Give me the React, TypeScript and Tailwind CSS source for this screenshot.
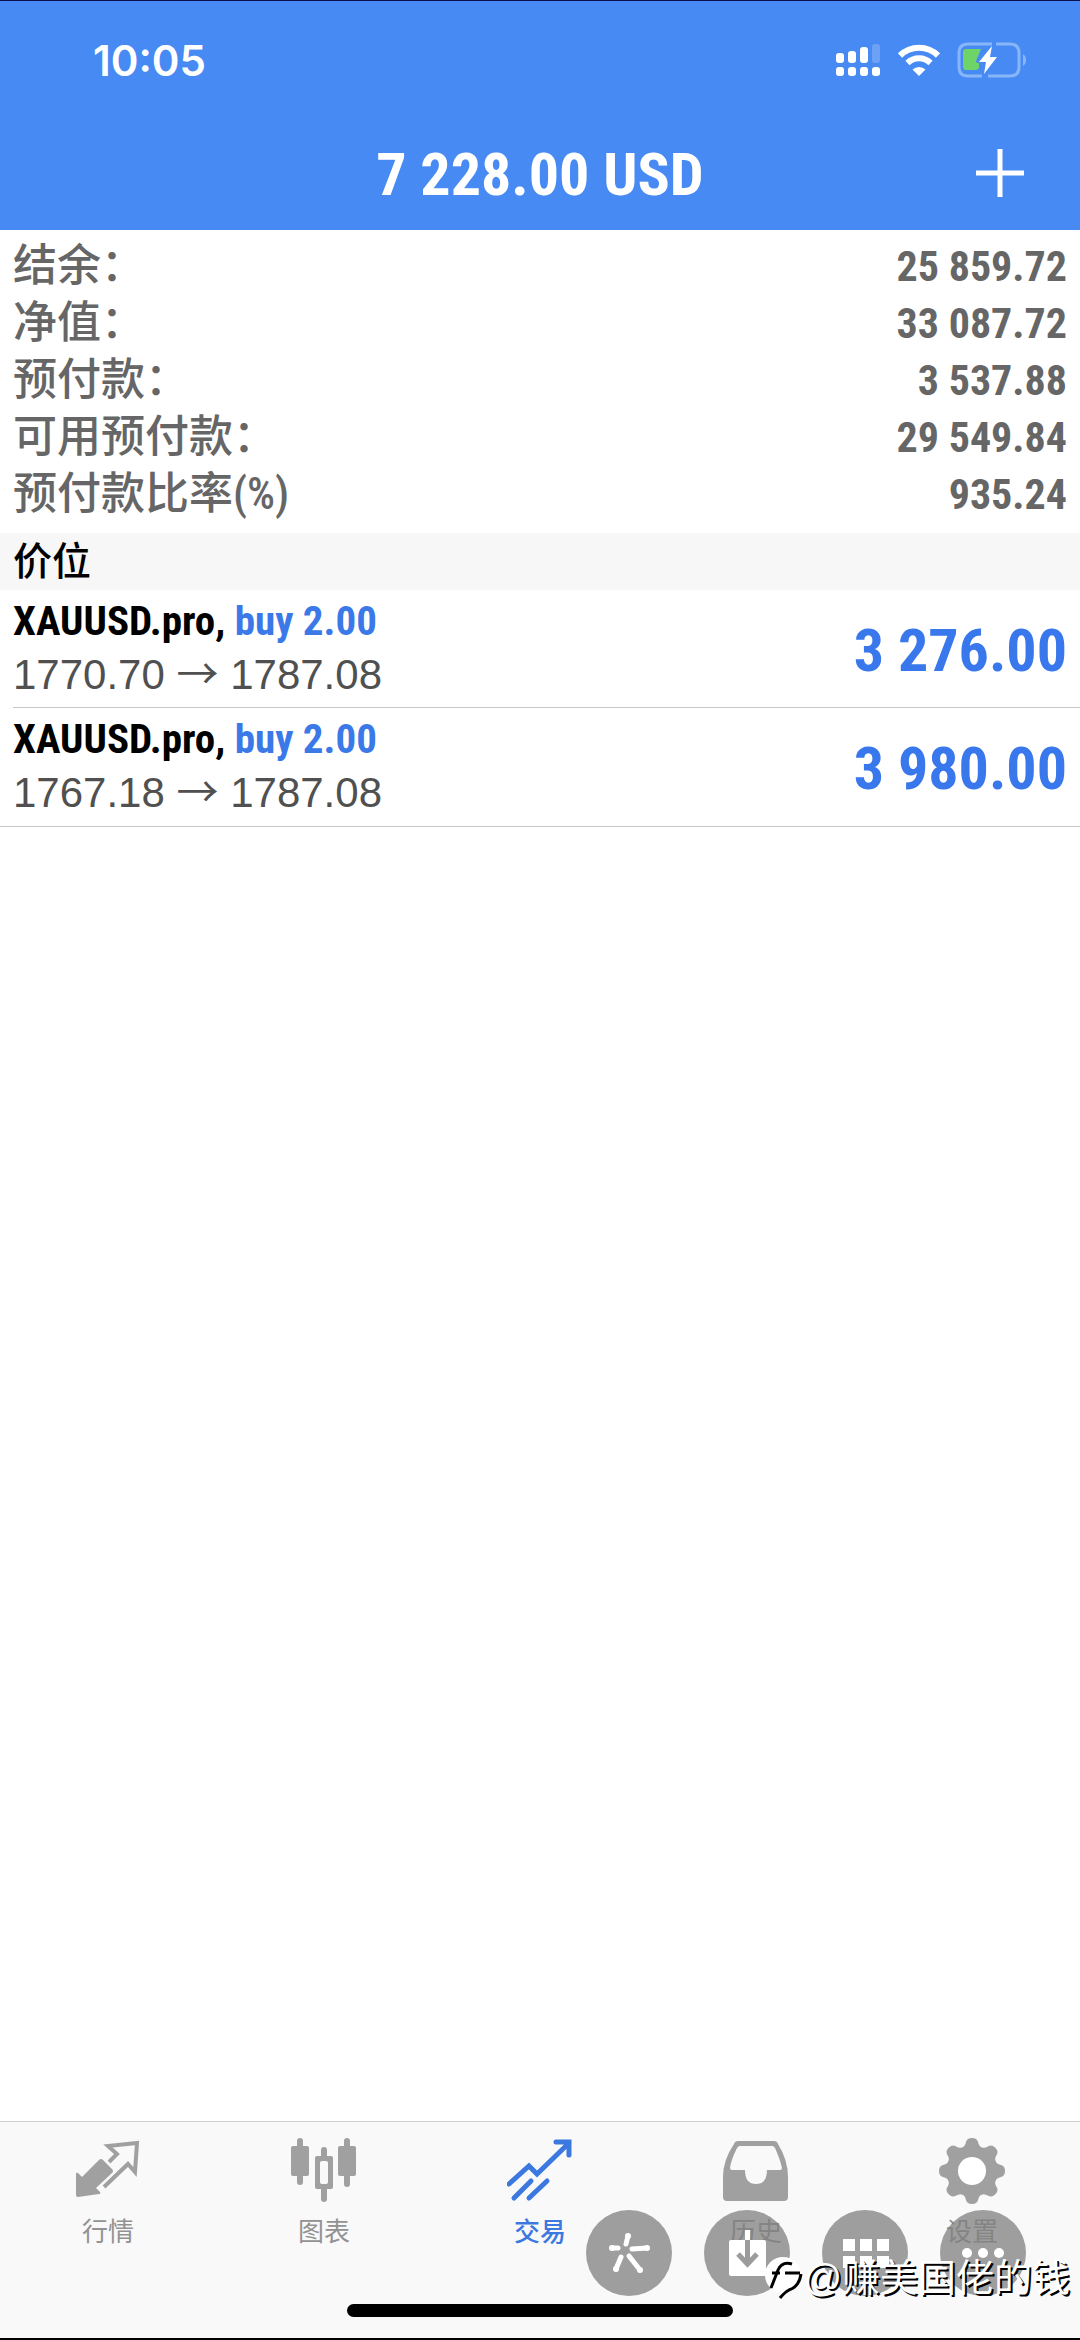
import type { ReactNode } from 'react';

const narrow = "font-['Roboto_Condensed','Noto_Sans_CJK_SC',sans-serif]";
const sans = "font-['Liberation_Sans','Noto_Sans_CJK_SC',sans-serif]";

const summary = [
  { label: '结余：', value: '25 859.72' },
  { label: '净值：', value: '33 087.72' },
  { label: '预付款：', value: '3 537.88' },
  { label: '可用预付款：', value: '29 549.84' },
  { label: '预付款比率(%)', value: '935.24' },
];

const positions = [
  { symbol: 'XAUUSD.pro', side: 'buy 2.00', open: '1770.70', current: '1787.08', profit: '3 276.00' },
  { symbol: 'XAUUSD.pro', side: 'buy 2.00', open: '1767.18', current: '1787.08', profit: '3 980.00' },
];

function SignalIcon() {
  return (
    <svg width="46" height="34" viewBox="0 0 46 34" fill="#fff">
      <rect x="1" y="10" width="8" height="10" rx="3" />
      <rect x="13" y="8" width="8" height="12" rx="3" />
      <rect x="25" y="4" width="8" height="16" rx="3" />
      <rect x="37" y="1" width="8" height="19" rx="3" opacity=".2" />
      <rect x="1" y="24" width="8" height="9" rx="3" />
      <rect x="13" y="24" width="8" height="9" rx="3" />
      <rect x="25" y="24" width="8" height="9" rx="3" />
      <rect x="37" y="24" width="8" height="9" rx="3" />
    </svg>
  );
}

function WifiIcon() {
  return (
    <svg width="44" height="34" viewBox="0 0 44 34" fill="none" stroke="#fff" strokeWidth="6">
      <path d="M3 12.5a27 27 0 0 1 38 0" />
      <path d="M10.500 20a16.500 16.500 0 0 1 23 0" />
      <path d="M22 33l-6.500-6.500a9.500 9.500 0 0 1 13 0z" fill="#fff" stroke="none" />
    </svg>
  );
}

function BatteryIcon() {
  return (
    <svg width="70" height="36" viewBox="0 0 70 36" fill="none">
      <path d="M35 2H11Q2 2 2 11V25Q2 34 11 34H25M31 34H53Q62 34 62 25V11Q62 2 53 2H39" stroke="#87b6f8" strokeWidth="3" />
      <path d="M66 12q3 2 3 6t-3 6z" fill="#87b6f8" />
      <path d="M9 7h15l-5 12q0 2 3 2v5q-1 2-3 2H9q-3 0-3-3V10q0-3 3-3z" fill="#6fd468" />
      <path d="M35 4L22 20h7l-2 12 13-17h-7z" fill="#fff" />
    </svg>
  );
}

function QuotesIcon() {
  return (
    <svg width="66" height="66" viewBox="0 0 66 66">
      <path d="M1 36q0-2 2-1l4 4 17-17q2-2 4 0l9 9q2 2 0 4L21 50l4 4q1 2-1 2L3 59q-2 0-2-2z" fill="#a0a0a0" />
      <path d="M34 24l8-8-9-8 29-3-2 29-7-8-24 23" fill="none" stroke="#a0a0a0" strokeWidth="4" />
    </svg>
  );
}

function ChartIcon() {
  return (
    <svg width="66" height="66" viewBox="0 0 66 66" fill="#a0a0a0">
      <rect x="6" y="0" width="6" height="47" rx="3" />
      <rect x="0" y="8" width="18" height="30" rx="2" />
      <rect x="53" y="0" width="6" height="49" rx="3" />
      <rect x="47" y="8" width="18" height="30" rx="2" />
      <rect x="30" y="9" width="6" height="55" rx="3" />
      <rect x="24" y="18" width="18" height="33" rx="2" />
      <rect x="29" y="23" width="8" height="23" rx="2" fill="#f9f9f9" />
    </svg>
  );
}

function TradeIcon() {
  return (
    <svg width="66" height="66" viewBox="0 0 66 66" fill="none" stroke="#3b79e0" strokeWidth="5" strokeLinecap="round">
      <path d="M2 46L22 28l8 8L62 5M49 4h13v13" />
      <path d="M7 60l17-17M22 60l18-17" />
    </svg>
  );
}

function HistoryIcon() {
  return (
    <svg width="66" height="66" viewBox="0 0 66 66" fill="#a0a0a0">
      <path
        fillRule="evenodd"
        d="M11 6q1-3 4-3h36q3 0 4 3 10 16 10 33v20q0 4-4 4H4q-4 0-4-4V39Q0 22 11 6zM17 8q-2 0-3 2Q8 22 7 30q0 2 2 2h13q0 14 11 14t11-14h13q2 0 2-2-2-9-7-20-1-2-3-2z"
      />
    </svg>
  );
}

function GearIcon() {
  const teeth = [0, 45, 90, 135, 180, 225, 270, 315];
  return (
    <svg width="66" height="66" viewBox="0 0 66 66" fill="#a0a0a0">
      {teeth.map(a => (
        <path key={a} d="M22 10q4-1 5-6 1-4 6-4t6 4q1 5 5 6l-4 14H26z" transform={`rotate(${a} 33 33)`} />
      ))}
      <circle cx="33" cy="33" r="25" />
      <circle cx="33" cy="33" r="14" fill="#fff" />
    </svg>
  );
}

const tabs = [
  { label: '行情', icon: <QuotesIcon />, active: false },
  { label: '图表', icon: <ChartIcon />, active: false },
  { label: '交易', icon: <TradeIcon />, active: true },
  { label: '历史', icon: <HistoryIcon />, active: false },
  { label: '设置', icon: <GearIcon />, active: false },
];

function FloatButton({ name, children }: { name: string; children: ReactNode }) {
  return (
    <button type="button" aria-label={name} className="size-[86px] rounded-full bg-[#7f7f7f]/75">
      <svg viewBox="0 0 86 86" fill="#fff">{children}</svg>
    </button>
  );
}

function FloatingTools() {
  return (
    <div className="absolute right-[54px] bottom-11 flex gap-8">
      <FloatButton name="Spark">
        <g stroke="#fff" strokeLinecap="round" strokeWidth="5">
          <path d="M42 26l-2 8M26 38l6 0M46 39l15-1M35 47l-5 12M43 46l11 14" />
        </g>
        <circle cx="42" cy="26" r="3" />
        <circle cx="26" cy="38" r="3" />
        <circle cx="61" cy="38" r="3" />
        <circle cx="30" cy="59" r="3" />
        <circle cx="54" cy="60" r="3" />
      </FloatButton>
      <FloatButton name="Download">
        <rect x="25" y="30" width="37" height="36" rx="2" />
        <path d="M41 20h5v10h-5z" />
        <path d="M43.500 30v23M34 44l9.500 10L53 44" fill="none" stroke="#9c9c9c" strokeWidth="5" />
      </FloatButton>
      <FloatButton name="Grid">
        <path d="M21 29h12v12H21zM38 29h12v12H38zM55 29h12v12H55zM21 46h12v12H21zM38 46h12v12H38zM55 46h12v12H55z" />
      </FloatButton>
      <FloatButton name="More">
        <circle cx="27" cy="43" r="5" />
        <circle cx="43" cy="43" r="5" />
        <circle cx="59" cy="43" r="5" />
      </FloatButton>
    </div>
  );
}

function Watermark() {
  return (
    <div className="absolute right-2.5 bottom-9 flex items-center">
      <svg width="38" height="44" viewBox="0 0 38 44" fill="none">
        <circle cx="18" cy="19" r="18" fill="#fff" />
        <path d="M6 32l7-18q4-9 14-6" stroke="#000" strokeWidth="3" />
        <path d="M7 17h8M20 17h15M36 18q-2 13-12 16-4 2-9 8" stroke="#000" strokeWidth="3" />
      </svg>
      <span className="text-[38px] leading-[52px] text-white [text-shadow:2px_2px_0_#000]">@赚美国佬的钱</span>
    </div>
  );
}

export default function App() {
  return (
    <div className={`relative flex min-h-screen flex-col border-t border-[#0a1050] bg-white ${sans}`}>
      <header className="bg-[#488af3] text-white">
        <div className="flex h-[118px] items-center justify-between pr-[53px] pl-[93px]">
          <span className="font-['Inter',sans-serif] text-[42px] font-semibold">10:05</span>
          <div className="flex items-center gap-4">
            <SignalIcon />
            <WifiIcon />
            <BatteryIcon />
          </div>
        </div>
        <div className="grid h-[111px] grid-cols-[1fr_auto_1fr] items-center px-14">
          <h1 className={`col-start-2 text-[60px] font-bold ${narrow}`}>7 228.00 USD</h1>
          <button type="button" aria-label="Add" className="justify-self-end pb-1">
            <svg width="48" height="48" viewBox="0 0 48 48" stroke="#fff" strokeWidth="5">
              <path d="M24 0v48M0 24h48" />
            </svg>
          </button>
        </div>
      </header>

      <main className="grow">
        <dl className="px-[13px] pt-2 pb-2.5 text-[#666]">
          {summary.map(row => (
            <div key={row.label} className={`flex items-center justify-between leading-[57px] ${narrow}`}>
              <dt className="text-[44px] font-medium">{row.label}</dt>
              <dd className="text-[42px] font-bold">{row.value}</dd>
            </div>
          ))}
        </dl>

        <h2 className="bg-[#f7f7f7] px-[13px] text-[39px] leading-[57px] font-medium text-black">价位</h2>

        <ul className="border-b border-[#c8c8c8]">
          {positions.map(p => (
            <li key={p.open} className="pl-[13px] not-last:*:border-b">
              <div className="flex h-[118px] items-center justify-between border-[#c8c8c8] pt-1 pr-[13px]">
                <div className="pb-1.5 leading-[54px]">
                  <p className={`text-[41px] font-bold text-black ${narrow}`}>
                    {p.symbol}, <span className="text-[#3b79e8]">{p.side}</span>
                  </p>
                  <p className="text-[42px] text-[#505050]">
                    {p.open} <span className="font-['Noto_Sans_CJK_SC'] leading-none">→</span> {p.current}
                  </p>
                </div>
                <span className={`text-[60px] font-bold text-[#3878ec] ${narrow}`}>{p.profit}</span>
              </div>
            </li>
          ))}
        </ul>
      </main>

      <nav className="grid h-[219px] grid-cols-5 border-t border-b-2 border-t-[#cfcfcf] border-b-black bg-[#f9f9f9] pt-4">
        {tabs.map(tab => (
          <a
            key={tab.label}
            href="#"
            className={`flex flex-col items-center gap-2 text-[26px] leading-10 ${tab.active ? 'font-medium text-[#3b79e0]' : 'text-[#929292]'}`}
          >
            {tab.icon}
            {tab.label}
          </a>
        ))}
      </nav>

      <div className="absolute bottom-[23px] left-1/2 h-[13px] w-[386px] -translate-x-1/2 rounded-full bg-black" />
      <FloatingTools />
      <Watermark />
    </div>
  );
}
